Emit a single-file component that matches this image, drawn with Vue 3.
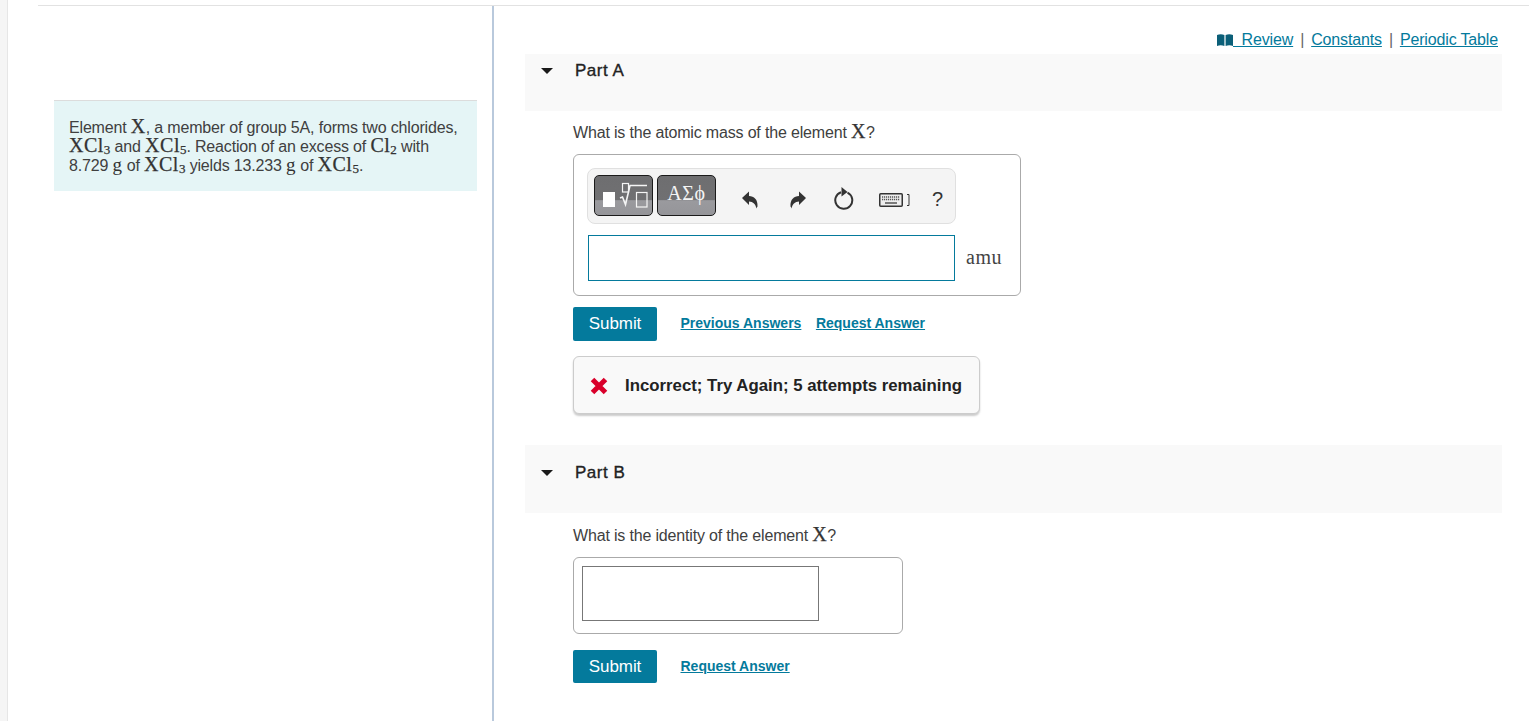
<script setup>
const links = ['Constants', 'Periodic Table']
</script>

<template>
  <div class="page">
    <div class="rail"></div>
    <div class="main">
      <aside class="left">
        <div class="intro">
          Element <span class="m">X</span>, a member of group 5A, forms two chlorides,
          <br />
          <span class="m">XCl<sub>3</sub></span> and <span class="m">XCl<sub>5</sub></span>. Reaction of an excess of <span class="m">Cl<sub>2</sub></span> with
          <br />
          8.729 <span class="m g">g</span> of <span class="m">XCl<sub>3</sub></span> yields 13.233 <span class="m g">g</span> of <span class="m">XCl<sub>5</sub></span>.
        </div>
      </aside>
      <section class="right">
        <nav class="toplinks">
          <svg class="book" width="16" height="12" viewBox="0 0 16 12"><path d="M0 1 C2.500 0 5 0 7.400 1 V12 C5 11 2.500 11 0 12Z M8.600 1 C11 0 13.500 0 16 1 V12 C13.500 11 11 11 8.600 12Z" fill="#0b5f78" /></svg>
          <a class="link review">&nbsp;&nbsp;Review</a>
          <template v-for="l in links" :key="l">
            <span class="sep">|</span><a class="link">{{ l }}</a>
          </template>
        </nav>

        <header class="part part-a">
          <span class="tri"></span><h2>Part A</h2>
        </header>
        <div class="body">
          <p class="q q-a">What is the atomic mass of the element <span class="m">X</span>?</p>
          <div class="box box-a">
            <div class="toolbar">
              <button class="tbtn tbtn-1">
                <svg width="57" height="39" viewBox="1 1 57 39">
                  <rect x="9" y="17" width="12" height="15" fill="#fff" />
                  <rect x="28.500" y="8.500" width="6" height="8.500" fill="none" stroke="#f5f5f5" stroke-width="1.200" />
                  <path d="M26 23l2.500-1 3 7.500L36 10.500h17" fill="none" stroke="#f5f5f5" stroke-width="1.600" />
                  <rect x="42.500" y="17.500" width="10.500" height="14.500" fill="none" stroke="#f5f5f5" stroke-width="1.200" />
                </svg>
              </button>
              <button class="tbtn tbtn-2">ΑΣϕ</button>
              <svg class="ic ic-undo" width="18" height="20" viewBox="0 0 18 20"><path d="M1 8 8 1.500v4.500c5 0 9 3.500 8.500 10.500-.5.500-1 1.500-1.200 2C15 14.500 12 11.500 8 11.500V15Z" fill="#333" /></svg>
              <svg class="ic ic-redo" width="18" height="20" viewBox="0 0 18 20"><path d="M17 8 10 1.500v4.500C5 6 1 9.500 1.500 16.500c.5.500 1 1.500 1.200 2C3 14.500 6 11.500 10 11.500V15Z" fill="#333" /></svg>
              <svg class="ic ic-reset" width="22" height="24" viewBox="0 0 22 24"><path d="M8 6.200A8.500 8.500 0 1 0 14.500 6.600" fill="none" stroke="#333" stroke-width="2" /><path d="M8.500 1 14.500 6 8.500 10.500Z" fill="#333" /></svg>
              <svg class="ic ic-kbd" width="32" height="16" viewBox="0 0 32 16">
                <rect x=".75" y="1.750" width="22.500" height="12.500" rx="1" fill="#eee" stroke="#333" stroke-width="1.500" />
                <path d="M3 5h18M3 7.500h18" stroke="#555" stroke-width="1.300" stroke-dasharray="1.200 .8" />
                <path d="M6 11h12" stroke="#555" stroke-width="1.500" />
                <path d="M28 2.500h2v11h-2" fill="none" stroke="#333" stroke-width="1" />
              </svg>
              <span class="help">?</span>
            </div>
            <div class="answer-row">
              <div class="input input-a"></div>
              <span class="unit">amu</span>
            </div>
          </div>
          <div class="actions actions-a">
            <button class="submit">Submit</button>
            <a class="act">Previous Answers</a>
            <a class="act">Request Answer</a>
          </div>
          <div class="feedback">
            <svg width="18" height="18" viewBox="0 0 18 18"><path d="M2.500 2.500 15.500 15.500M15.500 2.500 2.500 15.500" fill="none" stroke="#d9002b" stroke-width="5" /></svg>
            <span>Incorrect; Try Again; 5 attempts remaining</span>
          </div>
        </div>

        <header class="part part-b">
          <span class="tri"></span><h2>Part B</h2>
        </header>
        <div class="body">
          <p class="q q-b">What is the identity of the element <span class="m">X</span>?</p>
          <div class="box box-b">
            <div class="input input-b"></div>
          </div>
          <div class="actions actions-b">
            <button class="submit">Submit</button>
            <a class="act">Request Answer</a>
          </div>
        </div>
      </section>
    </div>
  </div>
</template>

<style>
html, body { margin: 0; padding: 0; background: #fff; overflow: hidden; }
</style>

<style scoped>
.page {
  display: flex;
  width: 1529px;
  height: 721px;
  overflow: hidden;
  font-family: "Liberation Sans", Arial, sans-serif;
  color: #404040;
  font-size: 16px;
  letter-spacing: -0.17px;
}
.rail {
  width: 7px;
  flex: none;
  background: #f5f5f5;
  border-right: 1px solid #e6e6e6;
}
.main {
  flex: 1;
  margin: 5px 0 0 30px;
  border-top: 1px solid #e2e2e2;
  display: flex;
  min-width: 0;
}
.left {
  flex: none;
  box-sizing: border-box;
  padding: 94px 15px 0 16px;
  border-right: 2px solid #b9c9dc;
  width: 456px;
}
.intro {
  background: #e5f5f6;
  border-top: 1px solid #dcdcdc;
  height: 91px;
  box-sizing: border-box;
  padding: 17px 0 0 15px;
  line-height: 19px;
  white-space: nowrap;
}
.m {
  font-family: "Liberation Serif", serif;
  font-size: 20px;
  line-height: 0;
  letter-spacing: 0.5px;
  color: #333;
  -webkit-text-stroke: 0.25px #333;
}
.m.g { -webkit-text-stroke: 0; font-size: 19px; }
.m sub {
  font-size: 13px;
  line-height: 0;
  vertical-align: -2px;
  letter-spacing: 0;
}
.right {
  flex: 1;
  min-width: 0;
  box-sizing: border-box;
  padding: 0 27px 0 31px;
}
.toplinks {
  display: flex;
  justify-content: flex-end;
  align-items: center;
  height: 48px;
  padding: 19px 4px 0 0;
  box-sizing: border-box;
}
.link {
  color: #047a9c;
  text-decoration: underline;
  cursor: pointer;
  letter-spacing: -0.15px;
}
.sep { margin: 0 7px; color: #666; }
.part {
  display: flex;
  align-items: flex-start;
  background: #f9f9f9;
  box-sizing: border-box;
}
.part-a { height: 57px; padding-top: 7px; }
.part-b { height: 68px; margin-top: 31px; padding-top: 18px; }
.tri {
  width: 0;
  height: 0;
  margin: 7px 22px 0 16px;
  border-left: 6.500px solid transparent;
  border-right: 6.500px solid transparent;
  border-top: 6.500px solid #1a1a1a;
}
.part h2 {
  margin: 0;
  font-size: 17px;
  line-height: 19px;
  font-weight: normal;
  color: #222;
  -webkit-text-stroke: 0.35px #222;
  letter-spacing: 0.5px;
}
.body { padding-left: 48px; }
.q { margin: 0; line-height: 22px; }
.q-a { padding-top: 11px; }
.q-b { padding-top: 12px; }
.box {
  border: 1px solid #aaa;
  border-radius: 6px;
  box-sizing: border-box;
}
.box-a { width: 448px; height: 142px; margin-top: 10px; padding: 13px 0 0 13px; }
.box-b { width: 330px; height: 77px; margin-top: 10px; padding: 8px; }
.toolbar {
  display: flex;
  align-items: center;
  width: 369px;
  height: 56px;
  box-sizing: border-box;
  background: #f4f4f4;
  border: 1px solid #e0e0e0;
  border-radius: 8px;
  padding: 0 0 0 6px;
}
.tbtn {
  width: 59px;
  height: 41px;
  box-sizing: border-box;
  border: 1px solid #1a1a1a;
  border-radius: 5px;
  padding: 0;
  margin: 0 4px 2px 0;
  display: flex;
  align-items: center;
  justify-content: center;
  background: linear-gradient(#6e6e70 0, #707072 62%, #9a9a9e 63%, #959599 100%);
  color: #f4f4f4;
}
.tbtn-2 {
  font-family: "Liberation Serif", serif;
  font-size: 20px;
  letter-spacing: 0.7px;
  padding-bottom: 4px;
}
.ic { flex: none; }
.ic-undo { margin: 8px 0 0 21px; }
.ic-redo { margin: 8px 0 0 30px; }
.ic-reset { margin: 4px 0 0 26px; }
.ic-kbd { margin: 8px 0 0 24px; }
.help {
  margin: 6px 0 0 21px;
  font-size: 20px;
  color: #333;
}
.answer-row {
  display: flex;
  align-items: center;
  margin-top: 11px;
}
.input {
  background: #fff;
  box-sizing: border-box;
}
.input-a {
  width: 367px;
  height: 46px;
  margin-left: 1px;
  border: 1px solid #047a9c;
}
.input-b {
  width: 237px;
  height: 55px;
  border: 1px solid #777;
}
.unit {
  margin: 0 0 2px 11px;
  font-family: "Liberation Serif", serif;
  font-size: 20px;
  letter-spacing: 0.5px;
  color: #444;
}
.actions {
  display: flex;
  align-items: center;
}
.actions-a { margin-top: 11px; }
.actions-b { margin-top: 16px; }
.actions-b .submit { height: 33px; }
.submit {
  width: 84px;
  height: 34px;
  border: 0;
  border-radius: 2px;
  background: #047a9c;
  color: #fff;
  font: 17px "Liberation Sans", Arial, sans-serif;
  letter-spacing: -0.05px;
  margin-right: 23.500px;
  padding: 0;
}
.act {
  color: #047a9c;
  font-size: 14px;
  font-weight: bold;
  text-decoration: underline;
  letter-spacing: 0;
  margin-right: 14.500px;
  padding-bottom: 2px;
  cursor: pointer;
}
.feedback {
  display: flex;
  align-items: center;
  gap: 17px;
  width: 407px;
  height: 58px;
  margin-top: 15px;
  box-sizing: border-box;
  padding: 2px 0 0 16px;
  background: #f9f9f9;
  border: 1px solid #ccc;
  border-radius: 6px;
  box-shadow: 0 2px 2px #ccc;
  color: #222;
  font-weight: bold;
  font-size: 16.800px;
  letter-spacing: 0;
  white-space: nowrap;
}
</style>
